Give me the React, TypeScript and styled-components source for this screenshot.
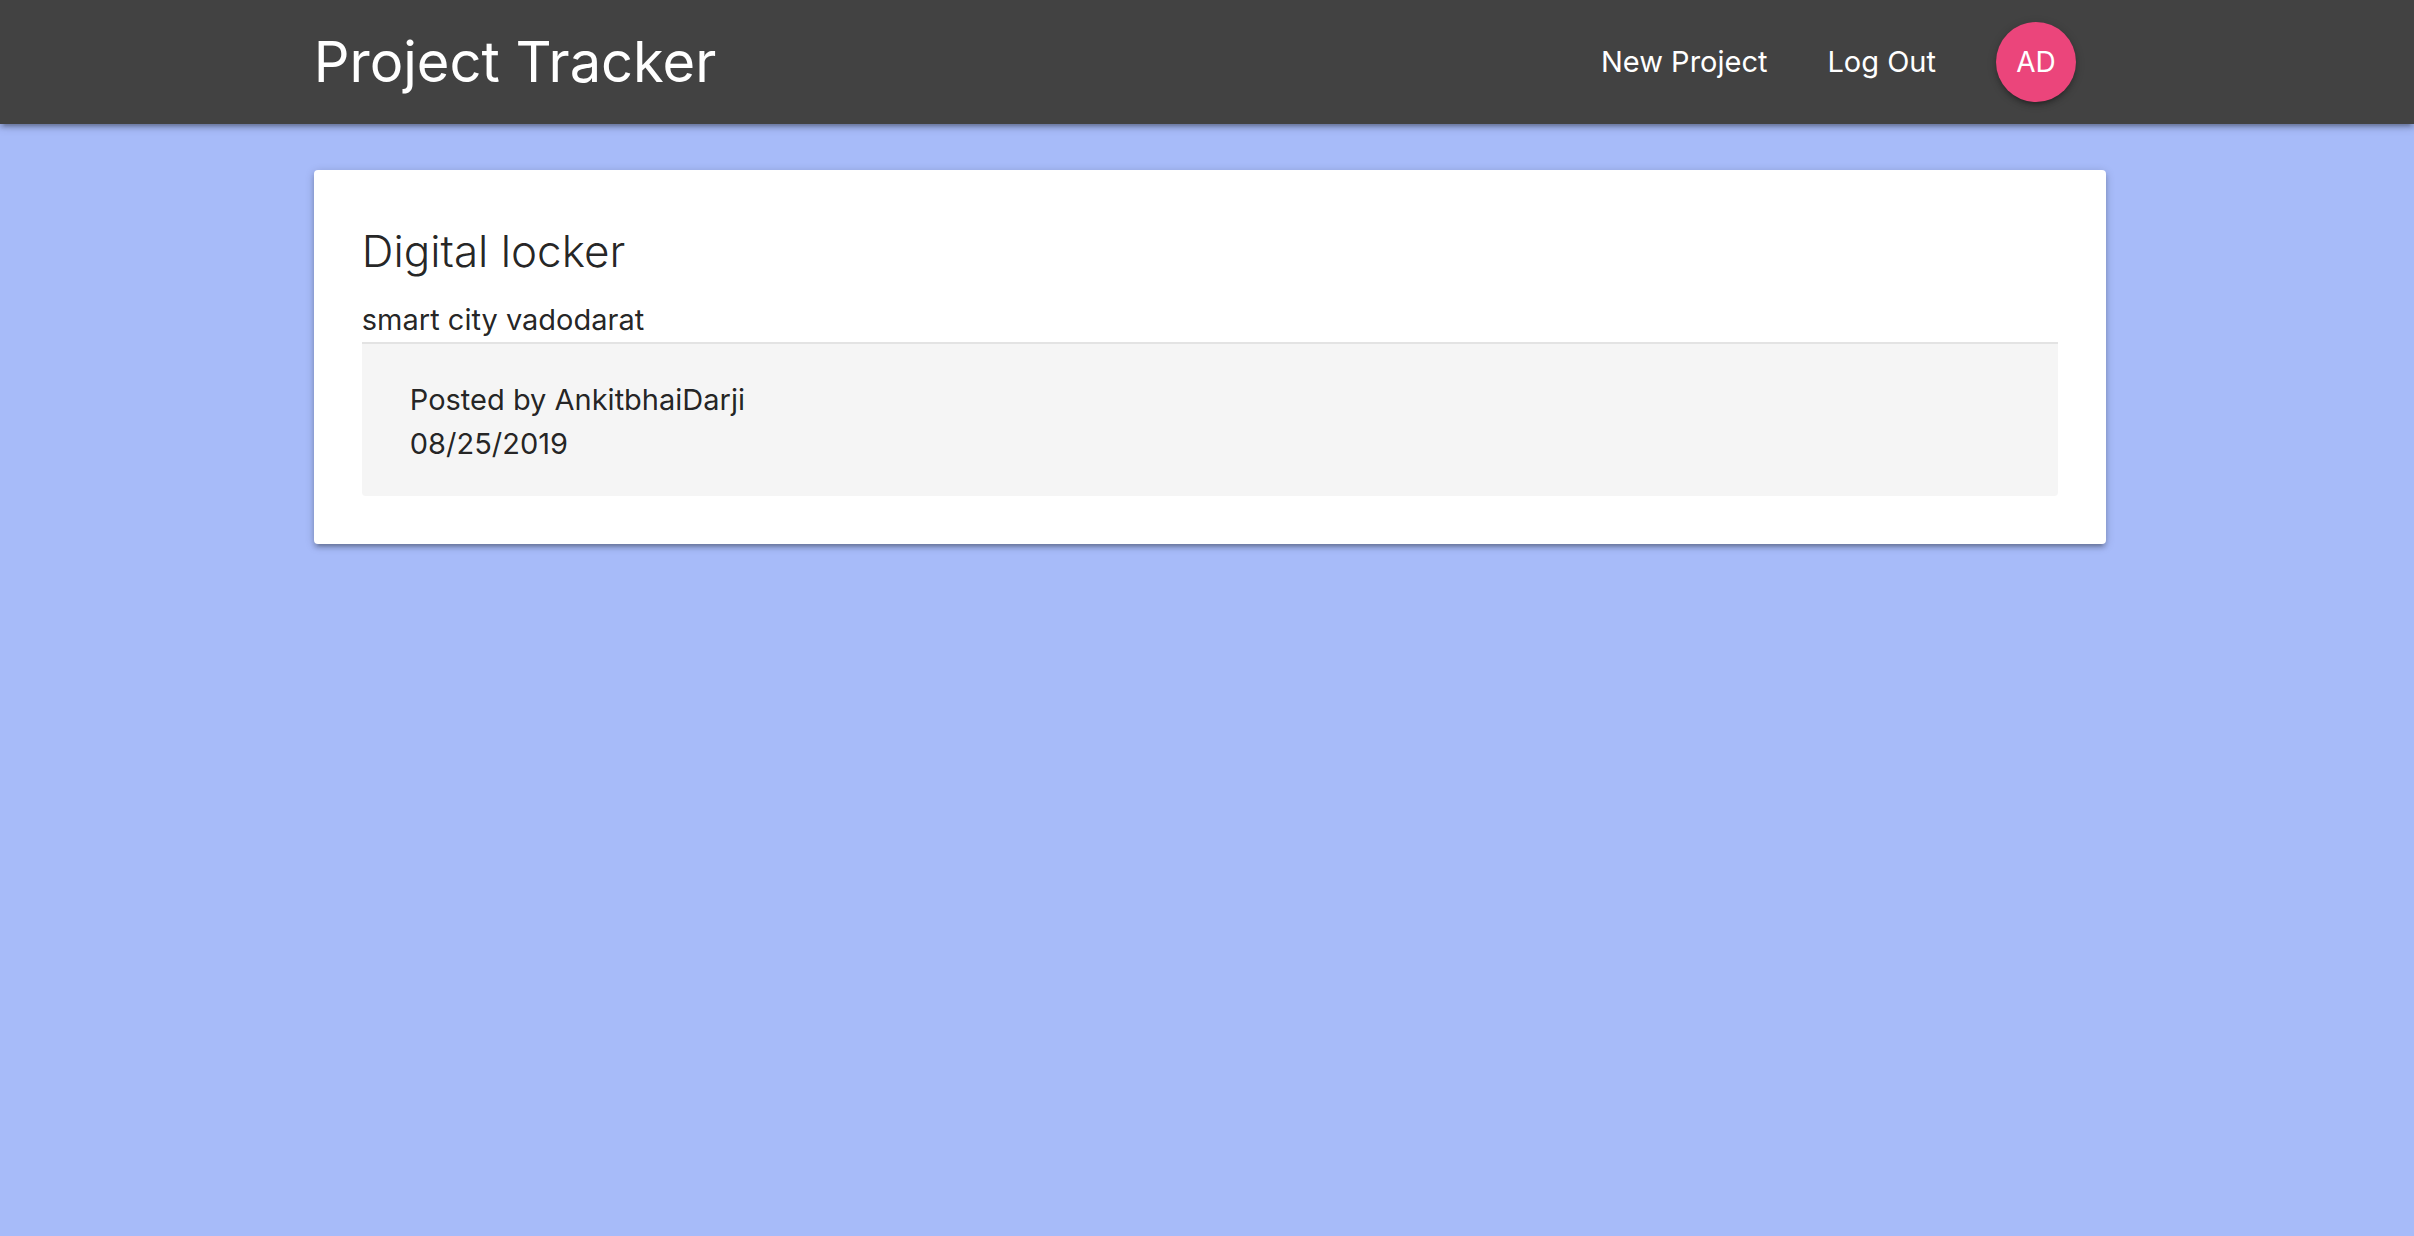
import React from "react";
import styled, { createGlobalStyle, css } from "styled-components";

const GlobalStyle = createGlobalStyle`
  *, *::before, *::after { box-sizing: border-box; }
  body {
    margin: 0;
    background: #a7bbf9;
    color: rgba(0, 0, 0, 0.87);
    font-family: Inter, "Open Sans", sans-serif;
    font-size: 29px;
    line-height: 44px;
  }
  a { color: inherit; text-decoration: none; }
`;

const raised = css`
  box-shadow:
    0 4px 4px 0 rgba(0, 0, 0, 0.14),
    0 6px 2px -4px rgba(0, 0, 0, 0.12),
    0 2px 10px 0 rgba(0, 0, 0, 0.2);
`;

const gutters = css`
  padding-left: 13%;
  padding-right: 308px;
`;

const NavBar = styled.nav`
  ${gutters}
  ${raised}
  display: flex;
  align-items: center;
  justify-content: space-between;
  min-height: 124px;
  background: #424242;
  color: #fff;
`;

const Brand = styled.a`
  font-size: 56px;
  line-height: 84px;
  white-space: nowrap;
`;

const NavList = styled.ul`
  display: flex;
  align-items: center;
  margin: 0;
  padding: 0;
  list-style: none;
  white-space: nowrap;
`;

const NavLink = styled.a`
  display: block;
  padding: 0 30px;
`;

const Avatar = styled.a`
  ${raised}
  display: flex;
  align-items: center;
  justify-content: center;
  width: 80px;
  height: 80px;
  margin: 0 30px;
  border-radius: 50%;
  background: #eb457b;
  font-size: 28px;
`;

const Page = styled.main`
  ${gutters}
  padding-top: 46px;
  padding-bottom: 46px;
`;

const Card = styled.article`
  ${raised}
  padding: 48px;
  border-radius: 4px;
  background: #fff;
`;

const CardTitle = styled.h1`
  margin: 0 0 14px;
  font-size: 44px;
  font-weight: 300;
  line-height: 66px;
`;

const Text = styled.p`
  margin: 0;
`;

const CardFooter = styled.footer`
  padding: 34px 48px 30px;
  border-top: 2px solid #e3e3e3;
  border-radius: 0 0 4px 4px;
  background: #f5f5f5;
`;

export default function App() {
  return (
    <>
      <GlobalStyle />
      <NavBar>
        <Brand href="#home">Project Tracker</Brand>
        <NavList>
          <li><NavLink href="#create">New Project</NavLink></li>
          <li><NavLink href="#logout">Log Out</NavLink></li>
          <li><Avatar href="#profile">AD</Avatar></li>
        </NavList>
      </NavBar>
      <Page>
        <Card>
          <CardTitle>Digital locker</CardTitle>
          <Text>smart city vadodarat</Text>
          <CardFooter>
            <Text>Posted by AnkitbhaiDarji</Text>
            <Text><time dateTime="2019-08-25">08/25/2019</time></Text>
          </CardFooter>
        </Card>
      </Page>
    </>
  );
}
